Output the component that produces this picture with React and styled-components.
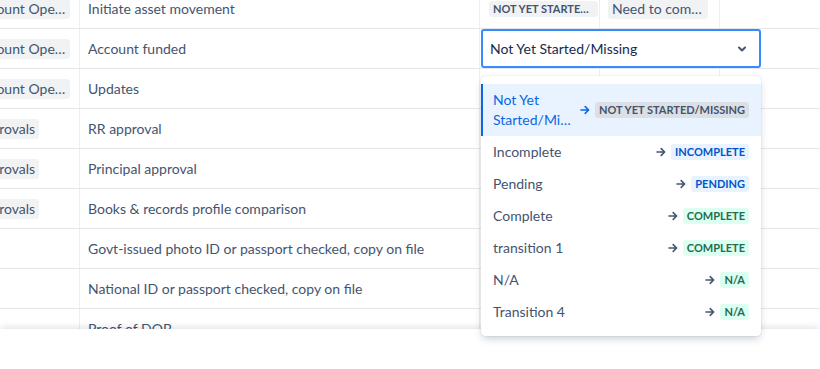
import React from "react";
import styled, { createGlobalStyle } from "styled-components";

const Global = createGlobalStyle`
  html, body { margin: 0; padding: 0; background: #fff; }
  body { font-family: Lato, "Noto Sans", sans-serif; -webkit-font-smoothing: antialiased; }
  * { box-sizing: border-box; }
`;

const Page = styled.div`
  width: 820px;
  height: 369px;
  overflow: hidden;
  display: flex;
  flex-direction: column;
  position: relative;
`;

const Scroller = styled.div`
  height: 329px;
  overflow: hidden;
  flex-shrink: 0;
`;

const Table = styled.div`
  margin-top: -11px;
  margin-left: -38px;
  display: flex;
  flex-direction: column;
`;

const Row = styled.div`
  display: grid;
  grid-template-columns: 118px 400px 120px 120px 140px;
  height: 40px;
  border-bottom: 1px solid #e4e6ea;
`;

const Cell = styled.div`
  display: flex;
  align-items: center;
  padding: ${(p) => (p.$tight ? "0 1px 0 9px" : "0 8px")};
  min-width: 0;
  border-right: 1px solid ${(p) => (p.$last ? "transparent" : "#eceef1")};
  font-size: 14px;
  color: #44546f;
  white-space: nowrap;
  overflow: hidden;
`;

const Tag = styled.span`
  display: inline-block;
  background: #f1f2f4;
  border-radius: 3px;
  padding: 0 4px;
  line-height: 20px;
  font-size: 14px;
  color: #44546f;
  max-width: ${(p) => p.$max || "none"};
  overflow: hidden;
  text-overflow: ellipsis;
  white-space: nowrap;
`;

const Lozenge = styled.span`
  display: inline-block;
  border-radius: 3px;
  padding: 0 4px;
  line-height: 16px;
  font-size: 11px;
  font-weight: 700;
  text-transform: uppercase;
  white-space: nowrap;
  overflow: hidden;
  text-overflow: ellipsis;
  max-width: ${(p) => p.$max || "none"};
  background: ${(p) =>
    p.$tone === "blue" ? "#e9f2ff" : p.$tone === "green" ? "#dcfff1" : p.$tone === "graySel" ? "#dcdfe4" : "#f1f2f4"};
  color: ${(p) =>
    p.$tone === "blue" ? "#0055cc" : p.$tone === "green" ? "#216e4e" : "#44546f"};
`;

const Footer = styled.div`
  flex: 1;
  background: #fff;
  box-shadow: 0 -3px 6px -1px rgba(9, 30, 66, 0.12);
  position: relative;
  z-index: 1;
`;

const SelectBox = styled.div`
  position: absolute;
  left: 481px;
  top: 29px;
  width: 280px;
  height: 39px;
  border: 2px solid #388bff;
  border-radius: 3px;
  background: #fff;
  display: flex;
  align-items: center;
  justify-content: space-between;
  padding: 0 12px 0 7px;
  font-size: 14px;
  color: #172b4d;
  z-index: 3;
`;

const Menu = styled.div`
  position: absolute;
  left: 481px;
  top: 76px;
  width: 280px;
  background: #fff;
  border-radius: 4px;
  box-shadow: 0 4px 8px -2px rgba(9, 30, 66, 0.25), 0 0 1px rgba(9, 30, 66, 0.31);
  padding: 8px 0;
  z-index: 4;
`;

const Item = styled.div`
  display: flex;
  align-items: center;
  gap: 6px;
  min-height: 32px;
  padding: ${(p) => (p.$selected ? "6px 12px 6px 10px" : "0 12px")};
  border-left: ${(p) => (p.$selected ? "2px solid #0c66e4" : "none")};
  background: ${(p) => (p.$selected ? "#e9f2ff" : "transparent")};
`;

const ItemLabel = styled.div`
  flex: 1;
  min-width: 0;
  font-size: 14px;
  line-height: 20px;
  color: ${(p) => (p.$selected ? "#0c66e4" : "#44546f")};
  display: -webkit-box;
  -webkit-line-clamp: 2;
  -webkit-box-orient: vertical;
  overflow: hidden;
  word-break: break-word;
`;

const Target = styled.div`
  flex-shrink: 0;
  display: flex;
  align-items: center;
  gap: 5px;
`;

const Arrow = ({ color }) => (
  <svg width="10" height="10" viewBox="0 0 10 10" fill="none">
    <path d="M1 5h7.5M5.2 1.6 8.6 5 5.2 8.4" stroke={color} strokeWidth="1.6" strokeLinecap="round" strokeLinejoin="round" />
  </svg>
);

const Chevron = () => (
  <svg width="10" height="8" viewBox="0 0 10 8" fill="none">
    <path d="M2 2.5 5 5.5 8 2.5" stroke="#44546f" strokeWidth="2" strokeLinecap="round" strokeLinejoin="round" />
  </svg>
);

const rows = [
  { group: "Account Opening", task: "Initiate asset movement", status: "Not yet started/missing", note: "Need to complete" },
  { group: "Account Opening", task: "Account funded" },
  { group: "Account Opening", task: "Updates" },
  { group: "Approvals", task: "RR approval" },
  { group: "Approvals", task: "Principal approval" },
  { group: "Approvals", task: "Books & records profile comparison" },
  { group: "", task: "Govt-issued photo ID or passport checked, copy on file" },
  { group: "", task: "National ID or passport checked, copy on file" },
  { group: "", task: "Proof of DOB" },
];

const options = [
  { label: "Not Yet Started/Missing", to: "Not yet started/missing", tone: "graySel", selected: true },
  { label: "Incomplete", to: "Incomplete", tone: "blue" },
  { label: "Pending", to: "Pending", tone: "blue" },
  { label: "Complete", to: "Complete", tone: "green" },
  { label: "transition 1", to: "Complete", tone: "green" },
  { label: "N/A", to: "N/A", tone: "green" },
  { label: "Transition 4", to: "N/A", tone: "green" },
];

export default function App() {
  return (
    <Page>
      <Global />
      <Scroller>
        <Table>
          {rows.map((r, i) => (
            <Row key={i}>
              <Cell>{r.group && <Tag $max="100px">{r.group}</Tag>}</Cell>
              <Cell>{r.task}</Cell>
              <Cell $tight>{r.status && <Lozenge $max="109px">{r.status}</Lozenge>}</Cell>
              <Cell>{r.note && <Tag $max="100px">{r.note}</Tag>}</Cell>
              <Cell $last />
            </Row>
          ))}
        </Table>
      </Scroller>
      <Footer />
      <SelectBox>
        <span>Not Yet Started/Missing</span>
        <Chevron />
      </SelectBox>
      <Menu>
        {options.map((o, i) => (
          <Item key={i} $selected={o.selected}>
            <ItemLabel $selected={o.selected}>{o.label}</ItemLabel>
            <Target>
              <Arrow color={o.selected ? "#0c66e4" : "#44546f"} />
              <Lozenge $tone={o.tone}>{o.to}</Lozenge>
            </Target>
          </Item>
        ))}
      </Menu>
    </Page>
  );
}
